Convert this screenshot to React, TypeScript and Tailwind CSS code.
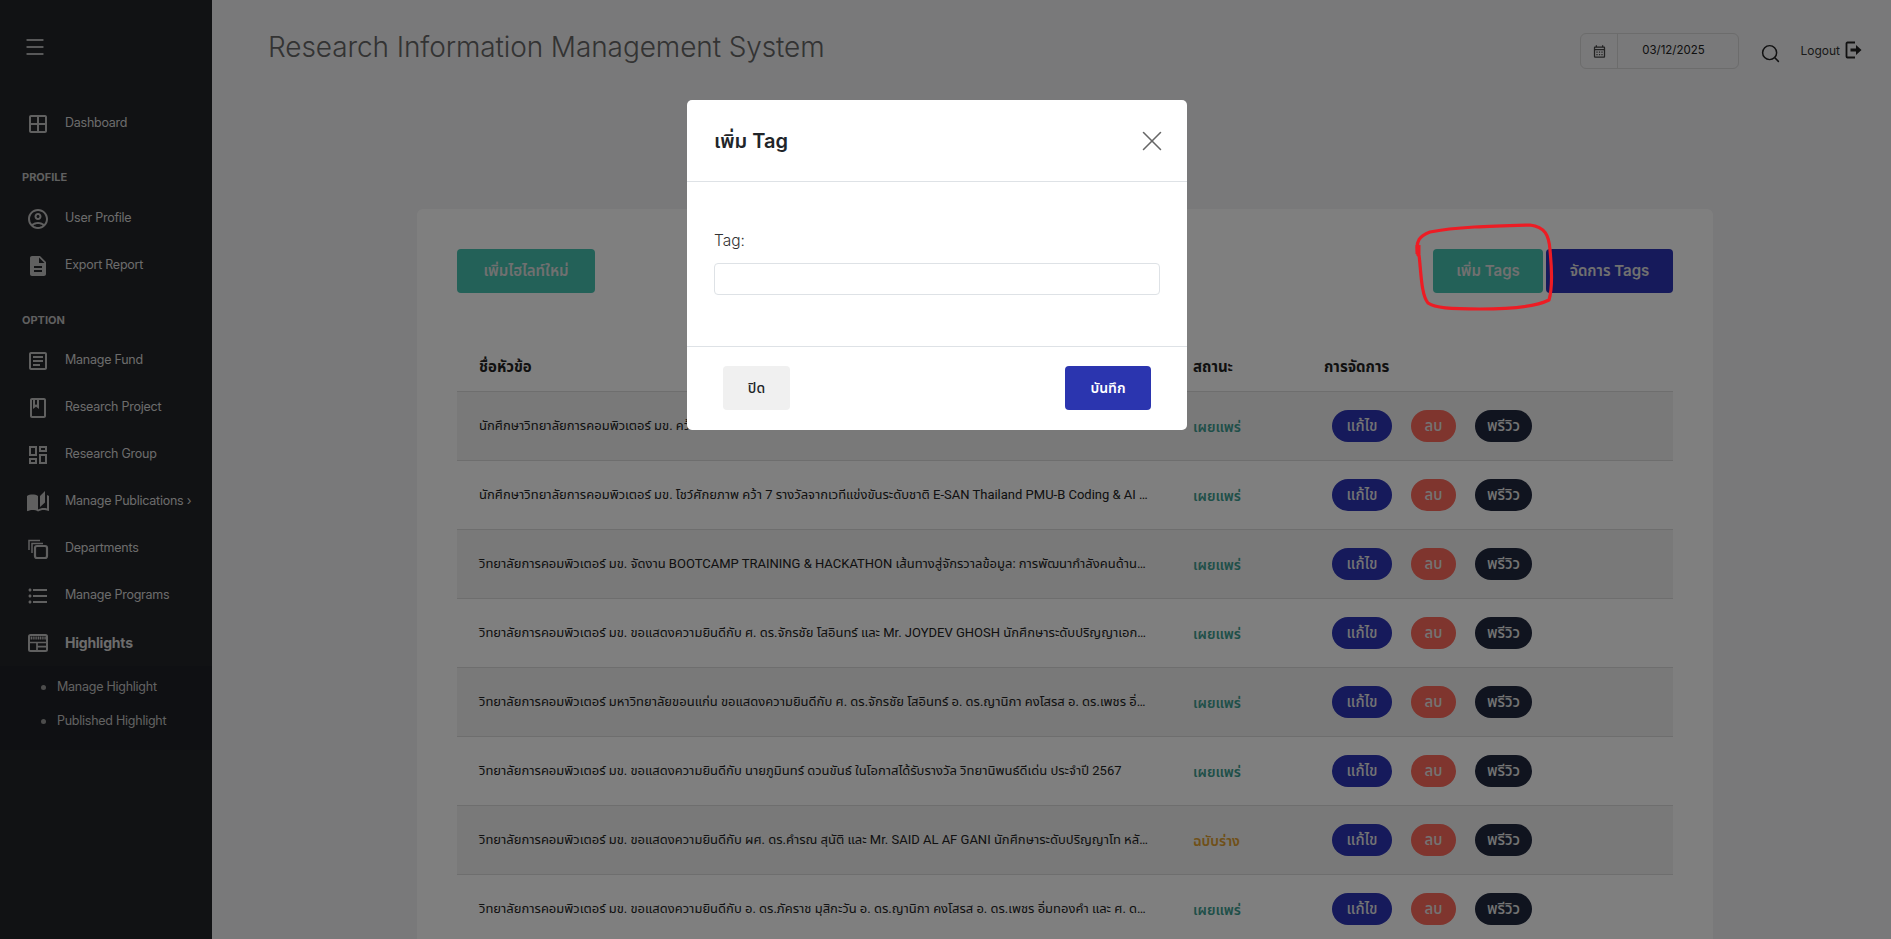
import {
  MdOutlineWindow,
  MdOutlineAccountCircle,
  MdDescription,
  MdOutlineArticle,
  MdOutlineBook,
  MdOutlineDashboard,
  MdAutoStories,
  MdFormatListBulleted,
  MdOutlineCalendarMonth,
} from 'react-icons/md';
import { Menu, Search, X } from 'lucide-react';
import type { ReactNode } from 'react';

const sans = 'font-["Inter","Noto_Sans","Noto_Sans_Thai","Liberation_Sans",sans-serif]';

function HighlightIcon() {
  return (
    <svg width="24" height="24" viewBox="0 0 24 24" fill="none" stroke="currentColor" strokeWidth="2">
      <rect x="3" y="4" width="18" height="16" rx="1.5" />
      <path d="M3 7h18" strokeWidth="3" strokeDasharray="1.2 0.6" />
      <path d="M3 11.5h18M11 11.5V20M11 15.7h10" strokeWidth="1.7" />
    </svg>
  );
}

function DepartmentsIcon() {
  return (
    <svg width="24" height="24" viewBox="0 0 24 24" fill="none" stroke="currentColor">
      <rect x="9" y="9" width="12" height="12" rx="2" strokeWidth="2.2" />
      <path d="M6 16V6.5h11M3 13V3.5h11" strokeWidth="1.5" />
    </svg>
  );
}

function LogoutIcon() {
  return (
    <svg width="17" height="18" viewBox="0 0 17 18" fill="none">
      <path d="M10 1.5H2.5a1 1 0 0 0-1 1v13a1 1 0 0 0 1 1H10" stroke="currentColor" strokeWidth="1.8" />
      <path d="M5.5 7.5H11V4l5.5 5-5.5 5v-3.5H5.5z" fill="currentColor" />
    </svg>
  );
}

function NavItem({ icon, label, bold }: { icon: ReactNode; label: ReactNode; bold?: boolean }) {
  return (
    <div className="flex h-[47px] items-center text-[#d8d8d8]">
      <span className="flex w-[65px] shrink-0 items-center pl-[26px] text-[#c0c0c0]">{icon}</span>
      <span className={bold ? 'text-[14px] font-bold tracking-[-0.2px]' : 'text-[12.5px] tracking-[-0.25px]'}>{label}</span>
    </div>
  );
}

function Sidebar() {
  return (
    <aside className="flex w-[212px] shrink-0 flex-col bg-[#232428]">
      <div className="flex h-[100px] items-start pl-[23px] pt-[35px] text-[#e0e0e0]">
        <Menu size={24} strokeWidth={1.3} />
      </div>
      <NavItem icon={<MdOutlineWindow size={24} />} label="Dashboard" />
      <div className="h-[48px] pl-[22px] pt-[23px] text-[11px] font-bold leading-[14px] text-[#c0c0c0]">PROFILE</div>
      <NavItem icon={<MdOutlineAccountCircle size={24} />} label="User Profile" />
      <NavItem icon={<MdDescription size={24} />} label="Export Report" />
      <div className="h-[48px] pl-[22px] pt-[24px] text-[11px] font-bold leading-[14px] text-[#c0c0c0]">OPTION</div>
      <NavItem icon={<MdOutlineArticle size={24} />} label="Manage Fund" />
      <NavItem icon={<MdOutlineBook size={24} />} label="Research Project" />
      <NavItem icon={<MdOutlineDashboard size={24} />} label="Research Group" />
      <NavItem icon={<MdAutoStories size={24} />} label="Manage Publications ›" />
      <NavItem icon={<DepartmentsIcon />} label="Departments" />
      <NavItem icon={<MdFormatListBulleted size={24} />} label="Manage Programs" />
      <NavItem icon={<HighlightIcon />} label="Highlights" bold />
      <div className="bg-[#1f2126] pb-[12px] pt-[4px] text-[12.5px] tracking-[-0.25px] text-[#c4c4c4]">
        <div className="flex h-[34px] items-center pl-[41px]">
          <span className="mr-[11px] h-[5px] w-[5px] rounded-full bg-[#999]" />
          Manage Highlight
        </div>
        <div className="flex h-[34px] items-center pl-[41px]">
          <span className="mr-[11px] h-[5px] w-[5px] rounded-full bg-[#999]" />
          Published Highlight
        </div>
      </div>
    </aside>
  );
}

const rows = [
  ['นักศึกษาวิทยาลัยการคอมพิวเตอร์ มข. คว้ารางวัลรองชนะเลิศ ACM ICPC Thailand National 2025', 'เผยแพร่'],
  ['นักศึกษาวิทยาลัยการคอมพิวเตอร์ มข. โชว์ศักยภาพ คว้า 7 รางวัลจากเวทีแข่งขันระดับชาติ E-SAN Thailand PMU-B Coding & AI Hackathon 2025', 'เผยแพร่'],
  ['วิทยาลัยการคอมพิวเตอร์ มข. จัดงาน BOOTCAMP TRAINING & HACKATHON เส้นทางสู่จักรวาลข้อมูล: การพัฒนากำลังคนด้านวิทยาการข้อมูล', 'เผยแพร่'],
  ['วิทยาลัยการคอมพิวเตอร์ มข. ขอแสดงความยินดีกับ ศ. ดร.จักรชัย โสอินทร์ และ Mr. JOYDEV GHOSH นักศึกษาระดับปริญญาเอก หลักสูตรวิทยาการคอมพิวเตอร์', 'เผยแพร่'],
  ['วิทยาลัยการคอมพิวเตอร์ มหาวิทยาลัยขอนแก่น ขอแสดงความยินดีกับ ศ. ดร.จักรชัย โสอินทร์ อ. ดร.ญานิกา คงโสรส อ. ดร.เพชร อิ่มทองคำ และคณะ', 'เผยแพร่'],
  ['วิทยาลัยการคอมพิวเตอร์ มข. ขอแสดงความยินดีกับ นายภูมินทร์ ดวนขันธ์ ในโอกาสได้รับรางวัล วิทยานิพนธ์ดีเด่น ประจำปี 2567', 'เผยแพร่'],
  ['วิทยาลัยการคอมพิวเตอร์ มข. ขอแสดงความยินดีกับ ผศ. ดร.คำรณ สุนัติ และ Mr. SAID AL AF GANI นักศึกษาระดับปริญญาโท หลักสูตรวิทยาการคอมพิวเตอร์', 'ฉบับร่าง'],
  ['วิทยาลัยการคอมพิวเตอร์ มข. ขอแสดงความยินดีกับ อ. ดร.ภัคราช มุสิกะวัน อ. ดร.ญานิกา คงโสรส อ. ดร.เพชร อิ่มทองคำ และ ศ. ดร.จักรชัย โสอินทร์', 'เผยแพร่'],
];

function Row({ title, status, odd }: { title: string; status: string; odd: boolean }) {
  return (
    <div className={`grid h-[69px] shrink-0 grid-cols-[714px_131px_1fr] items-center border-b border-[#dcdcdc] ${odd ? 'bg-[#f2f2f2]' : 'bg-white'}`}>
      <div className='truncate pl-[22px] pr-[23px] font-["Roboto","Noto_Sans","Noto_Sans_Thai",sans-serif] text-[13px] text-[#222]'>{title}</div>
      <div className={`pl-[22px] text-[14px] font-semibold ${status === 'เผยแพร่' ? 'text-[#3f9f92]' : 'text-[#e0a030]'}`}>{status}</div>
      <div className="flex gap-[19px] pl-[30px] text-[15px] font-medium text-[#e8e8e8]">
        <span className="flex h-[32px] w-[60px] items-center justify-center rounded-full bg-[#2c34b6]">แก้ไข</span>
        <span className="flex h-[32px] w-[45px] items-center justify-center rounded-full bg-[#ff6a5c]">ลบ</span>
        <span className="flex h-[32px] w-[57px] items-center justify-center rounded-full bg-[#20283e]">พรีวิว</span>
      </div>
    </div>
  );
}

function Modal() {
  return (
    <div className="absolute left-[687px] top-[100px] w-[500px] rounded-[5px] bg-white text-[#212529]">
      <div className="flex h-[82px] items-center justify-between border-b border-[#dee2e6] pl-[27px] pr-[18px]">
        <h2 className="text-[20px] font-semibold">เพิ่ม Tag</h2>
        <X size={34} strokeWidth={1.1} className="text-[#666]" />
      </div>
      <div className="h-[165px] border-b border-[#dee2e6] px-[27px] pt-[48px]">
        <label className="block text-[15.5px] font-light leading-[22px] text-[#333]">Tag:</label>
        <input className="mt-[11px] block h-[32px] w-[446px] rounded-[4px] border border-[#dee2e6]" />
      </div>
      <div className="flex h-[83px] items-center justify-between pb-[2px] pl-[36px] pr-[36px]">
        <button className="h-[44px] w-[67px] rounded-[4px] bg-[#f0f0f0] text-[14px] font-medium">ปิด</button>
        <button className="h-[44px] w-[86px] rounded-[4px] bg-[#2b35af] text-[14px] font-semibold text-white">บันทึก</button>
      </div>
    </div>
  );
}

export default function App() {
  return (
    <div className={`relative flex h-screen w-full overflow-hidden bg-[#f2f2f4] ${sans}`}>
      <Sidebar />
      <main className="flex-1">
        <header className="flex h-[94px] items-start pl-[56px] pr-[29px]">
          <h1 className="mt-[28px] text-[28px] font-light leading-[38px] tracking-[-0.1px] text-[#666]">Research Information Management System</h1>
          <div className="ml-auto mt-[33px] flex h-[36px] w-[159px] items-stretch rounded-[6px] border border-[#d8d8d8] text-[11.5px] text-[#222]">
            <span className="flex w-[37px] items-center justify-center border-r border-[#d8d8d8] text-[#444]">
              <MdOutlineCalendarMonth size={15} />
            </span>
            <span className="flex flex-1 items-center justify-center pr-[10px]">03/12/2025</span>
          </div>
          <Search size={21} strokeWidth={1.7} className="ml-[21px] mt-[43px] text-[#222]" />
          <span className="ml-[19px] mt-[42px] text-[12px] text-[#333]">Logout</span>
          <span className="ml-[5px] mt-[41px] text-[#222]"><LogoutIcon /></span>
        </header>
        <section className="ml-[205px] mt-[115px] w-[1296px] rounded-[6px] bg-white px-[40px] pt-[40px]">
          <div className="flex items-center text-[15px] font-semibold text-[#e0e0e0]">
            <button className="h-[44px] w-[138px] rounded-[4px] bg-[#46c2b0]">เพิ่มไฮไลท์ใหม่</button>
            <button className="ml-auto h-[44px] w-[110px] rounded-[4px] bg-[#46c2b0]">เพิ่ม Tags</button>
            <button className="ml-[3px] h-[44px] w-[127px] rounded-[4px] bg-[#2c34b6]">จัดการ Tags</button>
          </div>
          <div className="mt-[54px] grid h-[45px] grid-cols-[714px_131px_1fr] items-center border-b border-[#dcdcdc] pb-[3px] text-[15px] font-bold text-[#222]">
            <span className="pl-[22px]">ชื่อหัวข้อ</span>
            <span className="pl-[22px]">สถานะ</span>
            <span className="pl-[22px]">การจัดการ</span>
          </div>
          {rows.map((r, i) => (
            <Row key={i} title={r[0]} status={r[1]} odd={i % 2 === 0} />
          ))}
        </section>
      </main>
      <div className="absolute inset-0 bg-black/50" />
      <Modal />
      <svg className="pointer-events-none absolute inset-0" width="1891" height="939" fill="none">
        <path
          d="M1418 255C1415 240 1420 236 1430 232C1455 227 1490 226 1530 225C1545 227 1549 235 1550 250C1552 270 1552 290 1549 300C1535 307 1510 309 1480 309C1450 309 1435 308 1428 303C1421 295 1421 270 1419 255"
          stroke="#ed1c24"
          strokeWidth="3.2"
          strokeLinecap="round"
        />
        <path d="M1418 245V254" stroke="#ed1c24" strokeWidth="5" />
      </svg>
    </div>
  );
}
